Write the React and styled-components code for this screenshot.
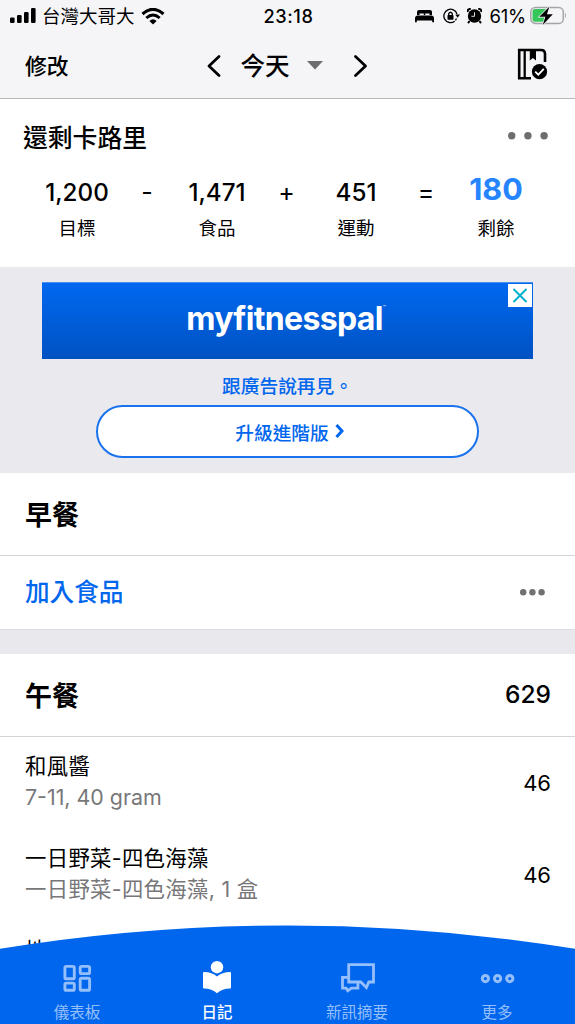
import React from 'react'

import styled, { createGlobalStyle } from 'styled-components'

const GlobalStyle = createGlobalStyle`
* {
    box-sizing: border-box;
}
body {
    margin: 0;
    background: #fff;
    color: #000;
    font-family: Inter, "Noto Sans CJK TC", sans-serif;
}
svg {
    display: block;
    flex: none;
}
`

const Screen = styled.div`
    width: 575px;
    height: 1024px;
    overflow: hidden;
    position: relative;
    background: #fff;
`

const Header = styled.header`
    height: 99px;
    background: #f5f5f8;
    border-bottom: 1px solid #b7b7ba;
`

const StatusBar = styled.div`
    display: grid;
    grid-template-columns: 1fr 70px 1fr;
    align-items: center;
    height: 32px;
    padding: 0 8px 0 10px;
`

const StatusSide = styled.div`
    display: flex;
    align-items: center;
    justify-content: ${props => (props.$end ? 'flex-end' : 'flex-start')};
    gap: ${props => props.$gap}px;
    font-size: 18.5px;
    line-height: 32px;
    white-space: nowrap;
`

const Percent = styled.span`
    margin-right: -3px;
    letter-spacing: -0.2px;
`

const Clock = styled.div`
    text-align: center;
    font-size: 18.2px;
    font-weight: 500;
    letter-spacing: 0.6px;
    line-height: 32px;
`

const TitleBar = styled.div`
    display: grid;
    grid-template-columns: 1fr 160px 1fr;
    align-items: center;
    height: 66px;
    padding: 0 27px 0 25px;
`

const Edit = styled.div`
    padding-top: 1px;
    font-size: 21.8px;
    font-weight: 500;
    line-height: 66px;
`

const DayPicker = styled.div`
    display: flex;
    align-items: center;
    font-size: 24.6px;
    font-weight: 500;
    line-height: 66px;
`

const Today = styled.span`
    margin: 0 17px 0 20px;
    padding-top: 1px;
`

const Next = styled.div`
    margin-left: auto;
`

const Done = styled.div`
    display: flex;
    justify-content: flex-end;
    padding-bottom: 3px;
`

const Summary = styled.section`
    height: 168px;
    padding-top: 19px;
`

const SummaryTop = styled.div`
    display: flex;
    align-items: center;
    justify-content: space-between;
    height: 36px;
    padding: 0 27px 0 23px;
    font-size: 24.8px;
    font-weight: 500;
`

const Equation = styled.div`
    display: grid;
    grid-template-columns: 100px 40px 100px 39px 100px 40px 100px;
    padding: 17px 0 0 27px;
`

const Cell = styled.div`
    text-align: center;
`

const Amount = styled.div`
    height: 42px;
    line-height: ${props => (props.$total ? 35 : 43)}px;
    font-size: ${props => (props.$total ? 30.5 : 24.2)}px;
    font-weight: ${props => (props.$total ? 700 : 500)};
    color: ${props => (props.$total ? '#2684ff' : '#000')};
`

const Operator = styled.div`
    text-align: center;
    font-size: 25px;
    line-height: 43px;
`

const Label = styled.div`
    font-size: 18.5px;
    line-height: 30px;
`

const Promo = styled.section`
    display: flex;
    flex-direction: column;
    align-items: center;
    height: 206px;
    padding-top: 15px;
    background: #eae9ee;
    color: #0066ee;
    font-weight: 500;
`

const Banner = styled.div`
    position: relative;
    display: flex;
    justify-content: center;
    width: 491px;
    height: 77px;
    background: linear-gradient(#0068f0, #0052c2);
    border-top: 1px solid #4b8ff0;
    color: #fff;
    font-size: 32px;
    font-weight: 700;
    letter-spacing: -0.65px;
    line-height: 72px;
`

const Trademark = styled.sup`
    font-size: 5px;
    font-weight: 400;
    line-height: 48px;
    width: 6px;
`

const Close = styled.div`
    position: absolute;
    top: 1px;
    right: 1px;
    width: 24px;
    height: 23px;
    background: #fff;
`

const PromoText = styled.div`
    margin-top: 12px;
    height: 34px;
    font-size: 18.7px;
    line-height: 32px;
`

const Upgrade = styled.div`
    display: flex;
    align-items: center;
    justify-content: center;
    gap: 6px;
    width: 383px;
    height: 53px;
    padding: 0 0 1px 4px;
    border: 2px solid #1a72ee;
    border-radius: 27px;
    background: #fff;
    font-size: 18.7px;
`

const MealHeader = styled.div`
    display: flex;
    align-items: center;
    justify-content: space-between;
    height: 83px;
    padding: 0 24px 2px 25px;
    border-bottom: 1px solid #d4d4d8;
    font-size: 27px;
    font-weight: 700;
`

const MealTotal = styled.span`
    font-size: 24.5px;
    font-weight: 500;
`

const AddFood = styled.div`
    display: flex;
    align-items: center;
    justify-content: space-between;
    height: 73px;
    padding: 0 30px 0 25px;
    color: #0066ee;
    font-size: 24.6px;
    font-weight: 500;
    line-height: 73px;
`

const AddLabel = styled.span`
    height: 73px;
`

const Gap = styled.div`
    height: 25px;
    background: #e9e8ed;
    border-top: 1px solid #dededf;
`

const Food = styled.div`
    display: flex;
    align-items: center;
    justify-content: space-between;
    height: 92px;
    padding: 0 24px 0 25px;
    font-size: 22px;
`

const FoodText = styled.div`
    padding-bottom: 2px;
    font-size: 21.4px;
    line-height: 31px;
`

const FoodName = styled.div`
    letter-spacing: 0.3px;
`

const FoodDetail = styled.div`
    color: #77777a;
    letter-spacing: ${props => (props.$wide ? 0.3 : 0)}px;
`

const TabBar = styled.nav`
    position: absolute;
    left: 0;
    bottom: 0;
    width: 575px;
    height: 99px;
`

const Tabs = styled.div`
    position: relative;
    display: grid;
    grid-template-columns: repeat(4, 140px);
    height: 99px;
    margin-top: -99px;
    padding: 34px 0 0 7px;
`

const Tab = styled.div`
    display: flex;
    flex-direction: column;
    align-items: center;
    color: ${props => (props.$active ? '#fff' : '#94bffa')};
    font-size: 15.5px;
    font-weight: ${props => (props.$active ? 500 : 400)};
    line-height: 24px;
    gap: 6px;
`

const Signal = () => (
    <svg width="26" height="16" viewBox="0 0 26 16">
        <rect x="0" y="9.5" width="4.6" height="5.5" rx="1.2" />
        <rect x="7" y="7" width="4.6" height="8" rx="1.2" />
        <rect x="14" y="4" width="4.6" height="11" rx="1.2" />
        <rect x="21" y="0" width="4.6" height="15" rx="1.2" />
    </svg>
)

const Wifi = () => (
    <svg width="24" height="17" viewBox="0 0 24 17" fill="none" stroke="#000">
        <path d="M1.5 6Q12-3.2 22.5 6" strokeWidth="3.2" />
        <path d="M5.3 10Q12 4 18.7 10" strokeWidth="3" />
        <path d="M8.4 12.9Q12 9.8 15.6 12.9L12 16.5Z" fill="#000" stroke="none" />
    </svg>
)

const Bed = () => (
    <svg width="21" height="14" viewBox="0 0 21 14">
        <path d="M2 6V3Q2 1 4 1H15Q17 1 17 3V6H14.5V4.4H10.2V6H8.8V4.4H4.5V6Z" />
        <path d="M2 6.5H17Q19 7 19 9V13.3H17.2V11.6H1.8V13.3H0V9Q0 7 2 6.5Z" />
    </svg>
)

const RotationLock = () => (
    <svg width="17" height="16" viewBox="0 0 17 16" fill="none" stroke="#000" strokeWidth="1.3">
        <path d="M14 6A6.7 6.7 0 1 0 11.7 13.2" />
        <path d="M12.3 6.5H17L14.6 9.8Z" fill="#000" stroke="none" />
        <path d="M13.5 10.5L12.4 12.3" />
        <rect x="4.5" y="7" width="6" height="4.8" rx=".7" fill="#000" stroke="none" />
        <path d="M5.7 7.5V5.6Q7.5 2.9 9.3 5.6V7.5" />
    </svg>
)

const Alarm = () => (
    <svg width="15" height="16" viewBox="0 0 15 16">
        <circle cx="7.5" cy="8" r="6.7" />
        <path d="M.8 4Q0 1.2 3.8.7M14.2 4Q15 1.2 11.2.7M2.6 13L1 15.2M12.4 13L14 15.2" fill="none" stroke="#000" strokeWidth="2" />
        <path d="M7.5 4.2V8.3H4.4" fill="none" stroke="#f5f5f8" strokeWidth=".9" />
    </svg>
)

const Battery = () => (
    <svg width="37" height="20" viewBox="0 0 37 20">
        <rect x=".8" y="1.4" width="32.5" height="16" rx="4.5" fill="none" stroke="#a5a5a7" strokeWidth="1.5" />
        <path d="M5 3H17V15.8H5Q2.5 15.8 2.5 13.3V5.5Q2.5 3 5 3Z" fill="#35c759" />
        <path d="M35 6.5Q37 9.4 35 12.3Z" fill="#a5a5a7" />
        <path d="M19.5 .5L9.3 10.8H15.4L12.7 19L22.8 8.2H16.9Z" stroke="#f5f5f8" strokeWidth="1.4" paintOrder="stroke" />
    </svg>
)

const Chevron = ({ right }) => (
    <svg width="14" height="22" viewBox="0 0 14 22" fill="none" stroke="#000" strokeWidth="2.7" strokeLinecap="round" strokeLinejoin="round">
        <path d={right ? 'M2.5 1.5L12.5 11L2.5 20.5' : 'M12 1.5L2 11L12 20.5'} />
    </svg>
)

const Journal = () => (
    <svg width="31" height="32" viewBox="0 0 31 32">
        <path d="M14 30.2H2.2V2H24Q28 2 28 6V14" fill="none" stroke="#000" strokeWidth="2.6" />
        <path d="M7.7 2V30" stroke="#000" strokeWidth="2.3" />
        <path d="M12.8 2H19V12.5L15.9 10L12.8 12.5Z" />
        <circle cx="22.5" cy="23.7" r="9.2" fill="#f5f5f8" />
        <circle cx="22.5" cy="23.7" r="7.6" />
        <path d="M18.2 23.6L21.3 26.7L26.8 20.8" fill="none" stroke="#fff" strokeWidth="1.8" />
    </svg>
)

const Dots = ({ r, step, fill }) => (
    <svg width={step * 2 + r * 2} height={r * 2}>
        {[0, 1, 2].map(i => (
            <circle key={i} cx={r + i * step} cy={r} r={r} fill={fill} />
        ))}
    </svg>
)

const DashboardIcon = () => (
    <svg width="34" height="36" viewBox="0 0 34 36" fill="none" stroke="currentColor" strokeWidth="2.9">
        <rect x="4.9" y="7.4" width="9.4" height="12.4" rx="1.4" />
        <rect x="4.9" y="24.1" width="9.4" height="7.2" rx="1.4" />
        <rect x="20.2" y="7.4" width="9.4" height="7.2" rx="1.4" />
        <rect x="20.2" y="19.2" width="9.4" height="12.1" rx="1.4" />
    </svg>
)

const DiaryIcon = () => (
    <svg width="34" height="36" viewBox="0 0 34 36" fill="currentColor">
        <circle cx="17" cy="8.2" r="6.2" />
        <path d="M4.2 13Q12 13 17 17.6Q22 13 30 13Q31 13 31 14V28.6Q31 29.6 30 29.6Q22 29.8 17 34.3Q12 29.8 4 29.6Q3 29.6 3 28.6V14Q3 13 4.2 13Z" />
    </svg>
)

const NewsIcon = () => (
    <svg width="36" height="36" viewBox="0 0 36 36" fill="none" stroke="currentColor" strokeWidth="2.8">
        <path d="M9.7 5.6H34.5V23H29.8L27.4 28.6L21.8 23H9.7Z" />
        <path d="M9.7 18.4H3.5V29.2H7.2L8.8 31.8L12.4 29.2H18.9V23" />
    </svg>
)

const MoreIcon = () => (
    <svg width="36" height="36" viewBox="0 0 36 36" fill="none" stroke="currentColor" strokeWidth="3">
        <circle cx="6.4" cy="19.6" r="3.1" />
        <circle cx="18.6" cy="19.6" r="3.1" />
        <circle cx="30.8" cy="19.6" r="3.1" />
    </svg>
)

const foods = [
    { name: '和風醬', detail: '7-11, 40 gram', calories: 46 },
    { name: '一日野菜-四色海藻', detail: '一日野菜-四色海藻, 1 盒', calories: 46, wide: true },
    { name: '地瓜', detail: '地瓜, 1 份', calories: 120, wide: true },
]

export default function App() {
    return (
        <Screen>
            <GlobalStyle />
            <Header>
                <StatusBar>
                    <StatusSide $gap={6}>
                        <Signal />
                        <span>台灣大哥大</span>
                        <Wifi />
                    </StatusSide>
                    <Clock>23:18</Clock>
                    <StatusSide $end $gap={7}>
                        <Bed />
                        <RotationLock />
                        <Alarm />
                        <Percent>61%</Percent>
                        <Battery />
                    </StatusSide>
                </StatusBar>
                <TitleBar>
                    <Edit>修改</Edit>
                    <DayPicker>
                        <Chevron />
                        <Today>今天</Today>
                        <svg width="16" height="9"><path d="M0 0H16L8 8.5Z" fill="#6d6d70" /></svg>
                        <Next><Chevron right /></Next>
                    </DayPicker>
                    <Done><Journal /></Done>
                </TitleBar>
            </Header>

            <Summary>
                <SummaryTop>
                    <span>還剩卡路里</span>
                    <Dots r={3.7} step={16.2} fill="#6d6d72" />
                </SummaryTop>
                <Equation>
                    <Cell>
                        <Amount>1,200</Amount>
                        <Label>目標</Label>
                    </Cell>
                    <Operator>-</Operator>
                    <Cell>
                        <Amount>1,471</Amount>
                        <Label>食品</Label>
                    </Cell>
                    <Operator>+</Operator>
                    <Cell>
                        <Amount>451</Amount>
                        <Label>運動</Label>
                    </Cell>
                    <Operator>=</Operator>
                    <Cell>
                        <Amount $total>180</Amount>
                        <Label>剩餘</Label>
                    </Cell>
                </Equation>
            </Summary>

            <Promo>
                <Banner>
                    myfitnesspal<Trademark>™</Trademark>
                    <Close>
                        <svg width="24" height="23"><path d="M5.5 5L18.5 18M18.5 5L5.5 18" stroke="#00aecd" strokeWidth="2" /></svg>
                    </Close>
                </Banner>
                <PromoText>跟廣告說再見。</PromoText>
                <Upgrade>
                    <span>升級進階版</span>
                    <svg width="9" height="14"><path d="M1.5 1L7 7L1.5 13" fill="none" stroke="#0066ee" strokeWidth="3" /></svg>
                </Upgrade>
            </Promo>

            <MealHeader>早餐</MealHeader>
            <AddFood>
                <AddLabel>加入食品</AddLabel>
                <Dots r={3.2} step={9.2} fill="#717173" />
            </AddFood>
            <Gap />
            <MealHeader>
                <span>午餐</span>
                <MealTotal>629</MealTotal>
            </MealHeader>
            {foods.map(food => (
                <Food key={food.name}>
                    <FoodText>
                        <FoodName>{food.name}</FoodName>
                        <FoodDetail $wide={food.wide}>{food.detail}</FoodDetail>
                    </FoodText>
                    <span>{food.calories}</span>
                </Food>
            ))}

            <TabBar>
                <svg width="575" height="99">
                    <path d="M0 23.8A1793 1793 0 0 1 575 23.8V99H0Z" fill="#0066ee" />
                </svg>
                <Tabs>
                    <Tab>
                        <DashboardIcon />
                        儀表板
                    </Tab>
                    <Tab $active>
                        <DiaryIcon />
                        日記
                    </Tab>
                    <Tab>
                        <NewsIcon />
                        新訊摘要
                    </Tab>
                    <Tab>
                        <MoreIcon />
                        更多
                    </Tab>
                </Tabs>
            </TabBar>
        </Screen>
    )
}
